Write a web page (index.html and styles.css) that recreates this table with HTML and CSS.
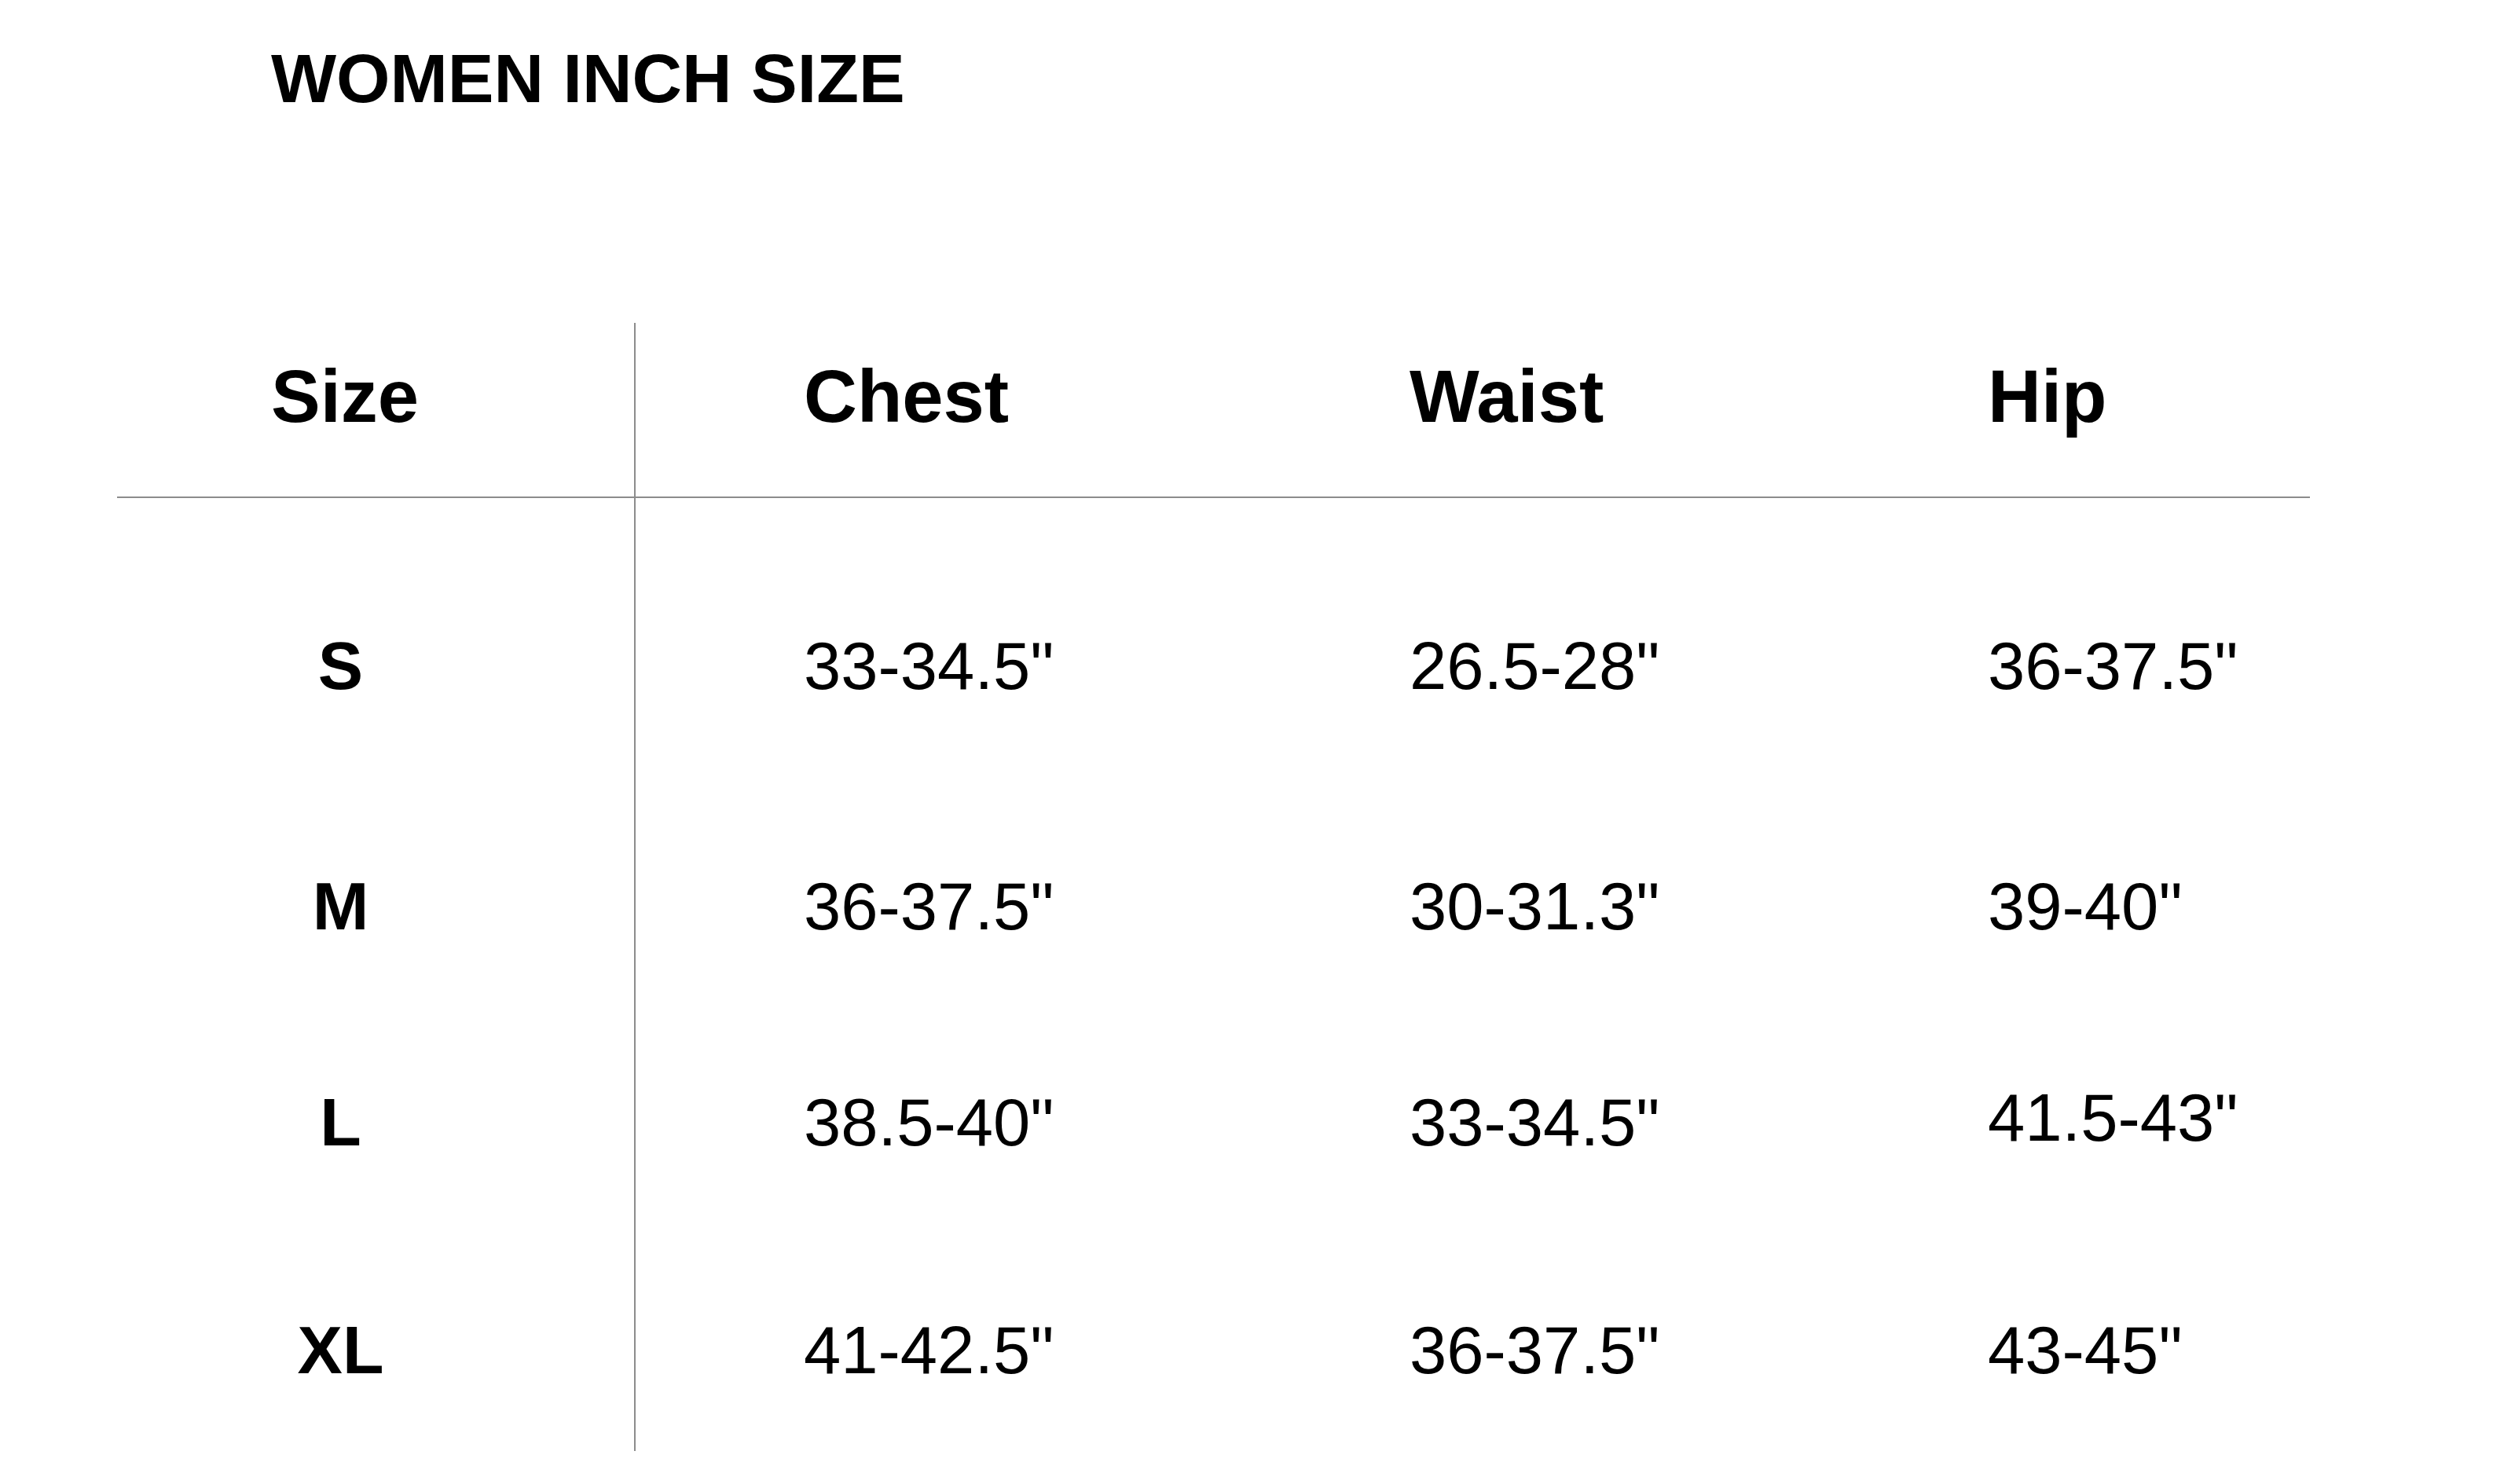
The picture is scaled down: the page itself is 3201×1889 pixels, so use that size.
FILE: index.html
```html
<!DOCTYPE html>
<html lang="en">
<head>
<meta charset="utf-8">
<title>Women Inch Size</title>
<link rel="stylesheet" href="styles.css">
</head>
<body>
<h1 class="title">WOMEN INCH SIZE</h1>
<div class="chart">
  <div class="cell head size-col size-head">Size</div>
  <div class="cell head">Chest</div>
  <div class="cell head">Waist</div>
  <div class="cell head">Hip</div>

  <div class="cell size-col size-val r-s">S</div>
  <div class="cell val r-s">33-34.5"</div>
  <div class="cell val r-s">26.5-28"</div>
  <div class="cell val r-s">36-37.5"</div>

  <div class="cell size-col size-val r-m">M</div>
  <div class="cell val r-m">36-37.5"</div>
  <div class="cell val r-m">30-31.3"</div>
  <div class="cell val r-m">39-40"</div>

  <div class="cell size-col size-val r-l">L</div>
  <div class="cell val r-l">38.5-40"</div>
  <div class="cell val r-l">33-34.5"</div>
  <div class="cell val r-l raised">41.5-43"</div>

  <div class="cell size-col size-val r-xl">XL</div>
  <div class="cell val r-xl">41-42.5"</div>
  <div class="cell val r-xl">36-37.5"</div>
  <div class="cell val r-xl">43-45"</div>
</div>
</body>
</html>
```
FILE: styles.css
```css
html, body {
  margin: 0;
  padding: 0;
  background: #ffffff;
}

body {
  width: 3201px;
  height: 1889px;
  overflow: hidden;
  font-family: "Liberation Sans", Arial, Helvetica, sans-serif;
  color: #000000;
}

.title {
  margin: 0;
  padding: 56px 0 0 345px;
  font-size: 88px;
  line-height: 88px;
  font-weight: 700;
  letter-spacing: 0;
}

.chart {
  margin: 267px 0 0 149px;
  width: 2791px;
  display: grid;
  grid-template-columns: 660px 985px 736px 1fr;
  align-items: start;
}

.cell {
  box-sizing: border-box;
  white-space: nowrap;
  height: 100%;
}

.head {
  font-size: 94px;
  line-height: 94px;
  font-weight: 700;
  padding-top: 47px;
  padding-bottom: 80px;
  border-bottom: 2px solid #8c8c8c;
}

.chart > .cell:nth-child(4n+2) {
  padding-left: 214px;
}

.size-col {
  border-right: 2px solid #8c8c8c;
}

.size-head {
  padding-left: 196px;
}

.size-val {
  font-size: 86px;
  line-height: 85px;
  font-weight: 700;
  text-align: center;
  padding-left: 192px;
  padding-right: 281px;
}

.val {
  font-size: 85px;
  line-height: 85px;
  font-weight: 400;
}

.r-s { padding-top: 171px; }
.r-m { padding-top: 221px; }
.r-l { padding-top: 190px; }
.r-xl { padding-top: 205px; padding-bottom: 86px; }

.r-l.raised { padding-top: 184px; }
```
